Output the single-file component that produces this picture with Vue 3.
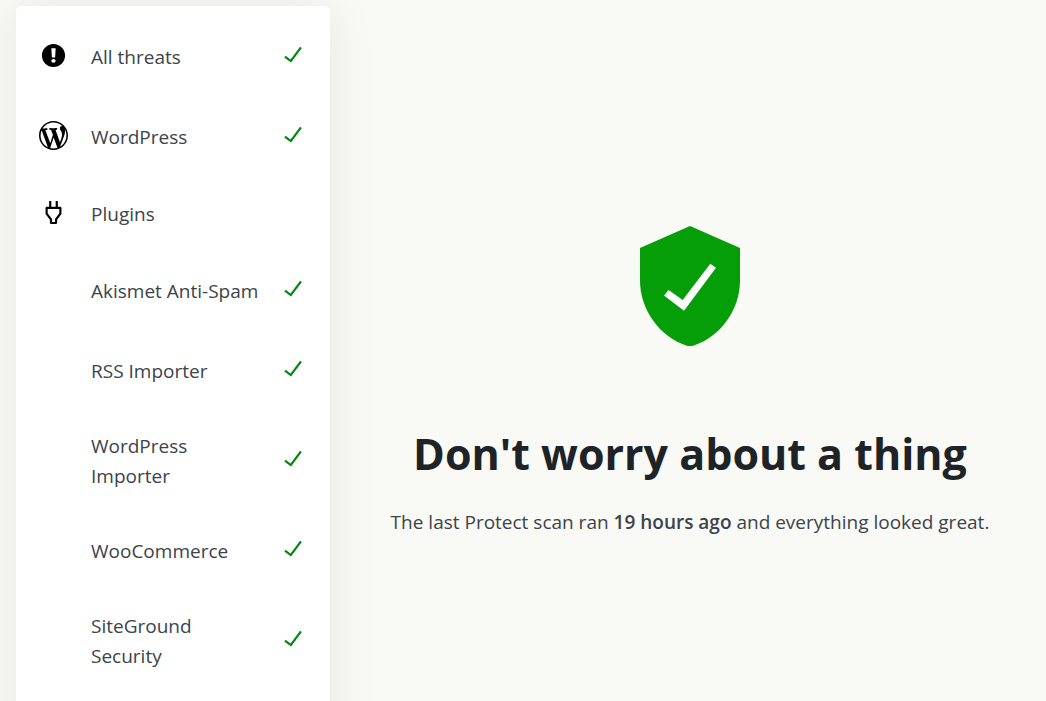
<script setup>
const items = [
  { label: 'All threats', icon: 'warning', checked: true },
  { label: 'WordPress', icon: 'wordpress', checked: true },
  {
    label: 'Plugins',
    icon: 'plugins',
    children: ['Akismet Anti-Spam', 'RSS Importer', 'WordPress Importer', 'WooCommerce', 'SiteGround Security'],
  },
]

const rows = items.flatMap((item) => [
  item,
  ...(item.children || []).map((label) => ({ label, checked: true })),
])

const icons = {
  warning: {
    box: '0 0 20 20',
    path: 'M10 2c4.42 0 8 3.58 8 8s-3.58 8-8 8-8-3.58-8-8 3.58-8 8-8zm1.13 9.38l.35-6.46H8.52l.35 6.46h2.26zm-.09 3.36c.24-.23.37-.55.37-.96 0-.42-.12-.74-.36-.97s-.59-.35-1.06-.35-.82.12-1.07.35-.37.55-.37.97c0 .41.13.73.38.96.26.23.61.34 1.06.34s.8-.11 1.05-.34z',
  },
  wordpress: {
    box: '0 0 20 20',
    path: 'M20 10c0-5.51-4.49-10-10-10C4.48 0 0 4.49 0 10c0 5.52 4.48 10 10 10 5.51 0 10-4.48 10-10zM7.78 15.37L4.37 6.22c.55-.02 1.17-.08 1.17-.08.5-.06.44-1.13-.06-1.11 0 0-1.45.11-2.37.11-.18 0-.37 0-.58-.01C4.12 2.69 6.87 1.11 10 1.11c2.33 0 4.45.87 6.05 2.34-.68-.11-1.65.39-1.65 1.58 0 .74.45 1.36.9 2.1.35.61.55 1.36.55 2.46 0 1.49-1.4 5-1.4 5l-3.03-8.37c.54-.02.82-.17.82-.17.5-.05.44-1.25-.06-1.22 0 0-1.44.12-2.38.12-.87 0-2.33-.12-2.33-.12-.5-.03-.56 1.2-.06 1.22l.92.08 1.26 3.41zM17.41 10c.24-.64.74-1.87.43-4.25.7 1.29 1.05 2.71 1.05 4.25 0 3.29-1.73 6.24-4.4 7.78.97-2.59 1.94-5.2 2.92-7.78zM6.1 18.09C3.12 16.65 1.11 13.53 1.11 10c0-1.3.23-2.48.72-3.59C3.25 10.3 4.67 14.2 6.1 18.09zm4.03-6.63l2.58 6.98c-.86.29-1.76.45-2.71.45-.79 0-1.57-.11-2.29-.33.81-2.38 1.62-4.74 2.42-7.1z',
  },
  plugins: {
    box: '2 2 20 20',
    path: 'M10.5 4v4h3V4H15v4h1.5a1 1 0 011 1v4l-3 4v2a1 1 0 01-1 1h-3a1 1 0 01-1-1v-2l-3-4V9a1 1 0 011-1H9V4h1.5zm.5 12.5v2h2v-2l3-4v-3H8v3l3 4z',
  },
}
</script>

<template>
  <div class="layout">
    <nav class="card" aria-label="Scan results">
      <ul class="list">
        <li v-for="row in rows" :key="row.label">
          <component
            :is="row.children ? 'div' : 'button'"
            :type="row.children ? undefined : 'button'"
            class="row"
            :class="{ group: row.children }"
          >
            <span class="slot">
              <svg v-if="row.icon" class="icon" :viewBox="icons[row.icon].box" aria-hidden="true">
                <path :d="icons[row.icon].path" fill-rule="evenodd" />
              </svg>
            </span>
            <span class="label">{{ row.label }}</span>
            <svg v-if="row.checked" class="icon check" viewBox="2 2 20 20" aria-hidden="true">
              <path d="M16.7 7.1l-6.3 8.5-3.3-2.5-.9 1.2 4.5 3.4L17.9 8z" />
            </svg>
          </component>
        </li>
      </ul>
    </nav>

    <main class="status">
      <svg class="shield" viewBox="0 0 100 120" aria-hidden="true">
        <path
          d="M50 0L100 22V54.5C100 84 80 111 54 119.4Q50 120.6 46 119.4C20 111 0 84 0 54.5V22z"
          fill="#069e08"
        />
        <path d="M24 69.5L28.5 64L42.7 74L70.3 37.7L76 41.7L44 84.7z" fill="#fff" />
      </svg>
      <h1 class="title">Don't worry about a thing</h1>
      <p class="text">The last Protect scan ran <strong>19 hours ago</strong> and everything looked great.</p>
    </main>
  </div>
</template>

<style>
body {
  margin: 0;
  background: #f9f9f6;
}
</style>

<style scoped>
.layout {
  box-sizing: border-box;
  display: grid;
  grid-template-columns: 314px minmax(0, 1fr);
  height: 100vh;
  padding: 6px 0 0 16px;
  overflow: hidden;
  font-family: 'Segoe UI', 'Open Sans', 'Noto Sans', sans-serif;
  color: #3c434a;
}

.card {
  padding: 11px 0 60px;
  background: #fff;
  border-radius: 5px;
  box-shadow: 0 0 50px rgba(0, 0, 0, 0.08);
}

.list {
  margin: 0;
  padding: 0;
  list-style: none;
}

.row {
  box-sizing: border-box;
  display: flex;
  align-items: center;
  width: 100%;
  min-height: 80px;
  padding: 20px 22px 20px 23px;
  border: 0;
  background: none;
  font: inherit;
  font-size: 19px;
  line-height: 30px;
  color: inherit;
  text-align: left;
}

.group {
  min-height: 74px;
}

.slot {
  flex: none;
  width: 29px;
  margin: 0 23px 3px 0;
}

.icon {
  display: block;
  flex: none;
  width: 30px;
  height: 30px;
}

.slot .icon {
  width: 29px;
  height: 29px;
  fill: #000;
}

.label {
  flex: 1;
  min-width: 0;
}

.check {
  margin: 0 0 6px 14px;
  fill: #008710;
}

.status {
  display: flex;
  flex-direction: column;
  align-items: center;
  padding: 220px 0 0 4px;
  text-align: center;
}

.shield {
  width: 100px;
  height: 120px;
}

.title {
  margin: 78px 0 0;
  font-size: 43px;
  font-weight: 700;
  line-height: 60px;
  color: #1d2327;
}

.text {
  margin: 23px 0 0;
  font-size: 19px;
  line-height: 30px;
}

.text strong {
  font-weight: 600;
}
</style>
